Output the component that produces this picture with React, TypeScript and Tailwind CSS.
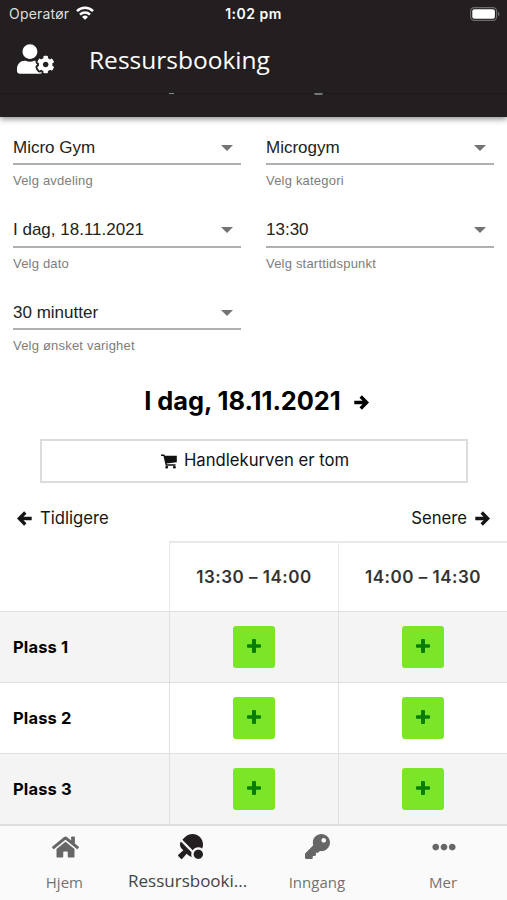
import React from 'react';
import { FaEllipsisH, FaHome, FaKey, FaTableTennis, FaUserCog } from 'react-icons/fa';

interface SelectFieldProps {
    value: string
    label: string
}

const fields: Array<SelectFieldProps> = [
    { value: 'Micro Gym', label: 'Velg avdeling' },
    { value: 'Microgym', label: 'Velg kategori' },
    { value: 'I dag, 18.11.2021', label: 'Velg dato' },
    { value: '13:30', label: 'Velg starttidspunkt' },
    { value: '30 minutter', label: 'Velg ønsket varighet' },
];

const slots = ['13:30 – 14:00', '14:00 – 14:30'];
const places = ['Plass 1', 'Plass 2', 'Plass 3'];

function App() {
    return (
        <div className="flex flex-col w-[507px] h-[900px] overflow-hidden bg-white text-black font-['Inter',sans-serif]">
            <Header />
            <main className="flex flex-col flex-1 min-h-0 overflow-hidden">
                <div className="grid grid-cols-2 gap-x-[25px] px-[13px] pt-4">
                    {fields.map((field) => <SelectField key={field.label} {...field} />)}
                </div>

                <div className="flex shrink-0 items-center justify-center gap-[13px] h-9 mt-[3px] pl-[6px]">
                    <h1 className="text-[25.4px] font-bold tracking-[-0.05px] whitespace-nowrap">I dag, 18.11.2021</h1>
                    <Arrow className="w-[15px] h-[15px] mt-0.5" />
                </div>

                <button className="flex shrink-0 items-center justify-center gap-[7px] h-11 ml-10 mr-[39px] mt-[19px] pt-px pl-0.5 border-2 border-[#dcdcdc] text-[16.7px] text-[#111]">
                    <CartIcon />
                    <span>Handlekurven er tom</span>
                </button>

                <div className="flex shrink-0 items-center justify-between h-9 mt-[18px] px-[17px] text-[16.7px] text-[#151515]">
                    <div className="flex items-center gap-2">
                        <Arrow className="w-[15px] h-[15px] rotate-180" />
                        <span>Tidligere</span>
                    </div>
                    <div className="flex items-center gap-2">
                        <span>Senere</span>
                        <Arrow className="w-[15px] h-[15px]" />
                    </div>
                </div>

                <Schedule />
            </main>
            <TabBar />
        </div>
    );
}

function Header() {
    return (
        <header className="relative z-10 shrink-0 h-[117px] bg-[#231f20] text-white shadow-[0_2px_6px_rgba(0,0,0,0.45)]">
            <div className="grid grid-cols-3 items-center h-[27px] pl-[9px] pr-[7px]">
                <div className="flex items-center gap-[7px] text-[14px] tracking-[0.2px] text-[#dedede]">
                    <span>Operatør</span>
                    <WifiIcon />
                </div>
                <div className="pr-0.5 text-center text-[14px] font-semibold tracking-[0.5px]">1:02 pm</div>
                <div className="flex justify-end"><BatteryIcon /></div>
            </div>
            <div className="flex items-center h-[67px] pl-[17px] pb-px border-b border-[#1d191a]">
                <FaUserCog className="w-[37px] h-[30px] -mt-0.5" />
                <div className="ml-[35px] text-[24.5px] leading-8 font-['Open_Sans',sans-serif]">Ressursbooking</div>
            </div>
            <div className="absolute left-[169px] top-[93px] w-[5px] h-px bg-[#888]" />
            <div className="absolute left-[314px] top-[93px] w-[9px] h-[2px] rounded-b bg-[#777]" />
        </header>
    );
}

function SelectField({ value, label }: SelectFieldProps) {
    return (
        <div className="h-[82.5px] font-['Liberation_Sans',sans-serif]">
            <div className="flex items-center justify-between h-8 pr-2 pb-px border-b-2 border-[#b0b0b0]">
                <span className="text-[17px] text-[#222]">{value}</span>
                <svg className="w-[12px] h-[6px] fill-[#737373]" viewBox="0 0 12 6">
                    <path d="M0 0h12L6 6z" />
                </svg>
            </div>
            <div className="mt-[6px] text-[13px] leading-5 tracking-[0.2px] text-[#7d7d7d]">{label}</div>
        </div>
    );
}

function Schedule() {
    return (
        <div className="shrink-0 mt-1">
            <div className="flex h-[70px]">
                <div className="w-[169px]" />
                {slots.map((slot) => (
                    <div key={slot} className="flex items-center justify-center w-[169px] pt-0.5 border-l border-t-2 border-[#e9e9e9] text-[17px] font-semibold tracking-[0.5px] text-[#333]">
                        {slot}
                    </div>
                ))}
            </div>
            {places.map((place) => (
                <div key={place} className="flex h-[71px] border-t border-[#e0e0e0] odd:bg-white even:bg-[#f4f4f4]">
                    <div className="flex items-center w-[169px] pl-[13px] pt-0.5 text-[16.5px] font-bold tracking-[0.15px]">{place}</div>
                    {slots.map((slot) => (
                        <div key={slot} className="flex items-center justify-center w-[169px] border-l border-[#e0e0e0]">
                            <button className="flex items-center justify-center w-[42px] h-[42px] pb-px rounded-[3px] bg-[#7be527]">
                                <svg className="w-[14px] h-[14px] fill-[#087d08]" viewBox="0 0 14 14">
                                    <path d="M6 0h2q1 0 1 1v4.2h4q1 0 1 1v1.6q0 1-1 1H9V13q0 1-1 1H6q-1 0-1-1V8.8H1q-1 0-1-1V6.2q0-1 1-1h4V1q0-1 1-1z" />
                                </svg>
                            </button>
                        </div>
                    ))}
                </div>
            ))}
        </div>
    );
}

function TabBar() {
    return (
        <nav className="grid grid-cols-4 shrink-0 h-[76px] border-t-2 border-[#dedede] bg-[#fafafa] text-[15px] text-[#737373] font-['Open_Sans',sans-serif]">
            <div className="flex flex-col items-center pt-[9px]">
                <FaHome className="w-[27px] h-6 ml-1 text-[#666]" />
                <span className="mt-[11px] ml-0.5 leading-6">Hjem</span>
            </div>
            <div className="flex flex-col items-center pt-2 text-[17px] text-[#444]">
                <FaTableTennis className="w-[25px] h-[25px] text-[#231f20]" />
                <span className="mt-[10px] -ml-[5px] leading-6 whitespace-nowrap">Ressursbooki...</span>
            </div>
            <div className="flex flex-col items-center pt-2">
                <FaKey className="w-[25px] h-[25px] ml-px text-[#666]" />
                <span className="mt-[11px] leading-6">Inngang</span>
            </div>
            <div className="flex flex-col items-center pt-[9px]">
                <FaEllipsisH className="w-6 h-6 text-[#666]" />
                <span className="mt-[11px] -ml-px leading-6">Mer</span>
            </div>
        </nav>
    );
}

function Arrow({ className }: { className?: string }) {
    return (
        <svg className={className} viewBox="0 0 15 15" fill="none" stroke="currentColor" strokeWidth="3.3">
            <path d="M0.3 7.5H12M6.7 1.5L12.7 7.5L6.7 13.5" />
        </svg>
    );
}

function CartIcon() {
    return (
        <svg className="w-4 h-[15px]" viewBox="0 0 16 15" fill="currentColor">
            <path d="M0 0.6h3.4l0.5 1.2H15.8V8.3L5.6 9.5l0.2 0.8H14.5v1.4H4.7L2.5 2H0z" />
            <rect x="4.3" y="11.9" width="2.8" height="2.6" rx="1" />
            <rect x="12" y="11.9" width="2.8" height="2.6" rx="1" />
        </svg>
    );
}

function WifiIcon() {
    return (
        <svg className="w-[18px] h-[14px] -mt-0.5" viewBox="0 0 18 14" fill="none" stroke="white" strokeWidth="2.5">
            <path d="M1 5.1a11.5 11.5 0 0 1 16 0M4 8.6a7.2 7.2 0 0 1 10 0" />
            <path d="M9 13.7L6 10.9a4.4 4.4 0 0 1 6 0z" fill="white" stroke="none" />
        </svg>
    );
}

function BatteryIcon() {
    return (
        <svg className="w-[30px] h-[14px]" viewBox="0 0 30 14">
            <rect x="0.6" y="0.6" width="26" height="12.8" rx="3.6" fill="none" stroke="#6d6a6b" strokeWidth="1.2" />
            <rect x="2.3" y="2.3" width="22.6" height="9.4" rx="2" fill="white" />
            <path d="M28 4.6q3 2.4 0 4.8z" fill="#6d6a6b" />
        </svg>
    );
}

export default App;
